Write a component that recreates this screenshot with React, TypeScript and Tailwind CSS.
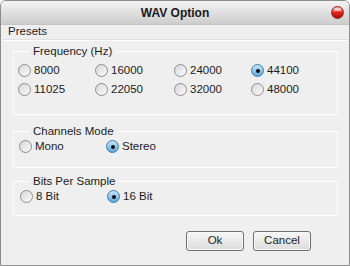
import React from "react";

const Radio = ({ label, checked = false }: { label: string; checked?: boolean }) => {
  return (
    <div className="flex items-center gap-[3px] h-[19px]">
      <span
        className={
          checked
            ? "w-[13px] h-[13px] rounded-full border border-[#3a7bb0] bg-gradient-to-b from-[#c9e6fb] to-[#5fa7dc] flex items-center justify-center"
            : "w-[13px] h-[13px] rounded-full border border-[#8d8d8d] bg-gradient-to-br from-[#d8d8d8] to-[#fbfbfb]"
        }
      >
        {checked && <span className="w-[4px] h-[4px] rounded-full bg-[#111]" />}
      </span>
      <span className="text-[11.5px] text-[#1c1c1c] leading-none">{label}</span>
    </div>
  );
};

const Group = ({ title, className, children }: { title: string; className: string; children: React.ReactNode }) => {
  return (
    <div className={"relative ml-[12px] w-[325px] border border-[#fdfdfd] " + className}>
      <span className="absolute left-[15px] top-[-8px] px-[4px] bg-[#efefef] text-[11.5px] leading-[14px] text-[#1c1c1c]">
        {title}
      </span>
      {children}
    </div>
  );
};

const App = () => {
  return (
    <div
      className="w-[350px] h-[266px] bg-[#efefef] border border-[#8c8c8c] rounded-t-[6px] flex flex-col overflow-hidden"
      style={{ fontFamily: '"Liberation Sans", Arial, sans-serif' }}
    >
      <div className="h-[24px] shrink-0 bg-gradient-to-b from-[#f3f3f3] to-[#cdcdcd] border-b border-[#c4c4c4] flex items-center justify-center relative">
        <span className="text-[12px] font-bold text-[#1a1a1a]">WAV Option</span>
        <span className="absolute right-[5px] top-[5px] w-[13px] h-[13px] rounded-full border border-[#8a2a2a] bg-gradient-to-b from-[#ff9a9a] via-[#e62222] to-[#a80b0b] flex justify-center">
          <span className="mt-[1px] w-[7px] h-[3px] rounded-full bg-white/60" />
        </span>
      </div>

      <div className="h-[14px] pl-[7px] flex items-center text-[11.5px] text-[#1c1c1c]">Presets</div>
      <div className="mx-[2px] h-[2px] border-t border-[#e0e0e0] border-b border-b-white" />

      <Group title="Frequency (Hz)" className="mt-[10px] h-[64px]">
        <div className="grid grid-cols-[77px_79px_77px_auto] pl-[4px] pt-[9px]">
          <Radio label="8000" />
          <Radio label="16000" />
          <Radio label="24000" />
          <Radio label="44100" checked />
          <Radio label="11025" />
          <Radio label="22050" />
          <Radio label="32000" />
          <Radio label="48000" />
        </div>
      </Group>

      <Group title="Channels Mode" className="mt-[16px] h-[37px]">
        <div className="grid grid-cols-[87px_auto] pl-[5px] pt-[5px]">
          <Radio label="Mono" />
          <Radio label="Stereo" checked />
        </div>
      </Group>

      <Group title="Bits Per Sample" className="mt-[13px] h-[35px]">
        <div className="grid grid-cols-[87px_auto] pl-[6px] pt-[5px]">
          <Radio label="8 Bit" />
          <Radio label="16 Bit" checked />
        </div>
      </Group>

      <div className="mt-[15px] flex justify-end gap-[9px] pr-[38px]">
        <button className="w-[58px] h-[20px] rounded-[3px] border border-[#707070] bg-gradient-to-b from-[#f6f6f6] to-[#dcdcdc] text-[11.5px] text-[#1c1c1c] shadow-[inset_0_0_0_1px_#fafafa]">
          Ok
        </button>
        <button className="w-[58px] h-[20px] rounded-[3px] border border-[#707070] bg-gradient-to-b from-[#f6f6f6] to-[#dcdcdc] text-[11.5px] text-[#1c1c1c] shadow-[inset_0_0_0_1px_#fafafa]">
          Cancel
        </button>
      </div>
    </div>
  );
};

export default App;
